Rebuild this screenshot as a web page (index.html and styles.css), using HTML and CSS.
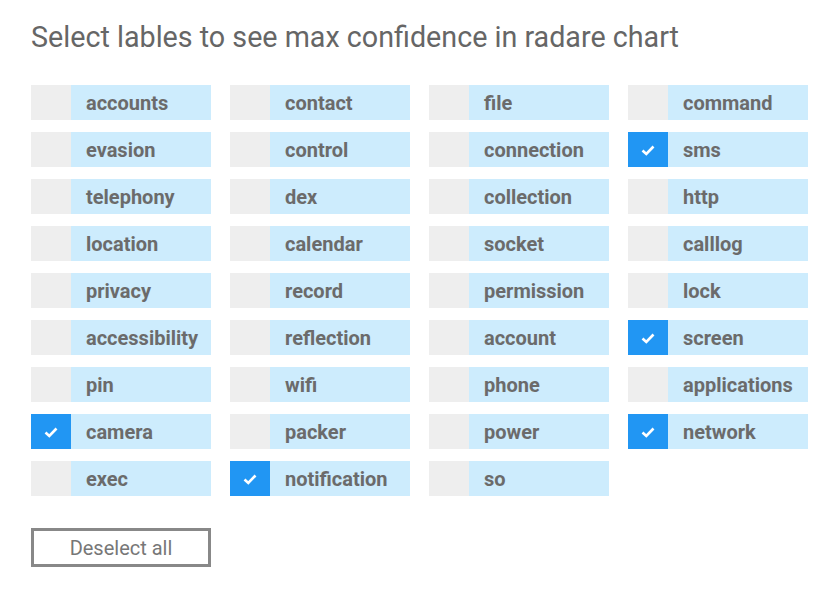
FILE: index.html
```html
<!DOCTYPE html>
<html>
<head>
<meta charset="utf-8">
<link rel="stylesheet" href="styles.css">
</head>
<body>
<div class="page">
  <h1 class="title">Select lables to see max confidence in radare chart</h1>
  <div class="grid">
    <div class="item"><span class="box"></span><span class="label">accounts</span></div>
    <div class="item"><span class="box"></span><span class="label">contact</span></div>
    <div class="item"><span class="box"></span><span class="label">file</span></div>
    <div class="item"><span class="box"></span><span class="label">command</span></div>

    <div class="item"><span class="box"></span><span class="label">evasion</span></div>
    <div class="item"><span class="box"></span><span class="label">control</span></div>
    <div class="item"><span class="box"></span><span class="label">connection</span></div>
    <div class="item checked"><span class="box"><svg class="tick" viewBox="0 0 16 16"><path d="M2.5 8.5 L6.3 12 L13.5 4.5" /></svg></span><span class="label">sms</span></div>

    <div class="item"><span class="box"></span><span class="label">telephony</span></div>
    <div class="item"><span class="box"></span><span class="label">dex</span></div>
    <div class="item"><span class="box"></span><span class="label">collection</span></div>
    <div class="item"><span class="box"></span><span class="label">http</span></div>

    <div class="item"><span class="box"></span><span class="label">location</span></div>
    <div class="item"><span class="box"></span><span class="label">calendar</span></div>
    <div class="item"><span class="box"></span><span class="label">socket</span></div>
    <div class="item"><span class="box"></span><span class="label">calllog</span></div>

    <div class="item"><span class="box"></span><span class="label">privacy</span></div>
    <div class="item"><span class="box"></span><span class="label">record</span></div>
    <div class="item"><span class="box"></span><span class="label">permission</span></div>
    <div class="item"><span class="box"></span><span class="label">lock</span></div>

    <div class="item"><span class="box"></span><span class="label">accessibility</span></div>
    <div class="item"><span class="box"></span><span class="label">reflection</span></div>
    <div class="item"><span class="box"></span><span class="label">account</span></div>
    <div class="item checked"><span class="box"><svg class="tick" viewBox="0 0 16 16"><path d="M2.5 8.5 L6.3 12 L13.5 4.5" /></svg></span><span class="label">screen</span></div>

    <div class="item"><span class="box"></span><span class="label">pin</span></div>
    <div class="item"><span class="box"></span><span class="label">wifi</span></div>
    <div class="item"><span class="box"></span><span class="label">phone</span></div>
    <div class="item"><span class="box"></span><span class="label">applications</span></div>

    <div class="item checked"><span class="box"><svg class="tick" viewBox="0 0 16 16"><path d="M2.5 8.5 L6.3 12 L13.5 4.5" /></svg></span><span class="label">camera</span></div>
    <div class="item"><span class="box"></span><span class="label">packer</span></div>
    <div class="item"><span class="box"></span><span class="label">power</span></div>
    <div class="item checked"><span class="box"><svg class="tick" viewBox="0 0 16 16"><path d="M2.5 8.5 L6.3 12 L13.5 4.5" /></svg></span><span class="label">network</span></div>

    <div class="item"><span class="box"></span><span class="label">exec</span></div>
    <div class="item checked"><span class="box"><svg class="tick" viewBox="0 0 16 16"><path d="M2.5 8.5 L6.3 12 L13.5 4.5" /></svg></span><span class="label">notification</span></div>
    <div class="item"><span class="box"></span><span class="label">so</span></div>
  </div>
  <button class="deselect">Deselect all</button>
</div>
</body>
</html>
```
FILE: styles.css
```css
html, body {
  margin: 0;
  padding: 0;
  background: #ffffff;
}
.page {
  padding: 17px 31px 0 31px;
  font-family: Roboto, "Liberation Sans", sans-serif;
}
.title {
  margin: 0;
  font-size: 28.7px;
  font-weight: 400;
  line-height: 40px;
  color: #666666;
}
.grid {
  margin-top: 28px;
  display: grid;
  grid-template-columns: repeat(4, 180px);
  column-gap: 19px;
  row-gap: 12px;
}
.item {
  display: flex;
  height: 35px;
  background: #cdecfd;
}
.box {
  width: 40px;
  flex: none;
  background: #eeeeee;
  display: flex;
  align-items: center;
  justify-content: center;
}
.checked .box {
  background: #2196f3;
}
.tick {
  width: 16px;
  height: 16px;
  fill: none;
  stroke: #ffffff;
  stroke-width: 2.6;
}
.label {
  padding-left: 15px;
  display: flex;
  align-items: center;
  font-size: 20px;
  font-weight: 700;
  color: #6b6b6b;
}
.deselect {
  margin-top: 32px;
  display: block;
  width: 180px;
  height: 39px;
  border: 3px solid #888888;
  background: #ffffff;
  font-family: Roboto, "Liberation Sans", sans-serif;
  font-size: 20px;
  color: #777777;
  padding: 0;
}
```
